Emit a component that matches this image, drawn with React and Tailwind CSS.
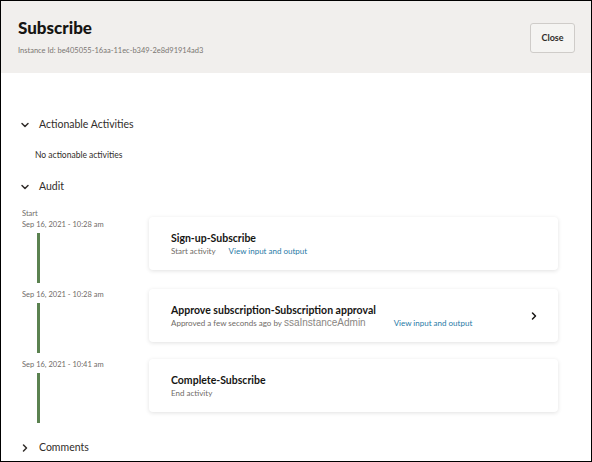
import { ChevronDown, ChevronRight } from 'lucide-react';

const rows = [
  {
    start: true,
    date: 'Sep 16, 2021 - 10:28 am',
    title: 'Sign-up-Subscribe',
    sub: 'Start activity',
    link: true,
  },
  {
    date: 'Sep 16, 2021 - 10:28 am',
    title: 'Approve subscription-Subscription approval',
    sub: 'Approved a few seconds ago by',
    user: 'ssaInstanceAdmin',
    link: true,
    chevron: true,
  },
  {
    date: 'Sep 16, 2021 - 10:41 am',
    title: 'Complete-Subscribe',
    sub: 'End activity',
  },
];

const SectionHeader = ({ label, open = true }) => (
  <div className="flex items-center h-[20px] text-[#312d2a]">
    <div className="w-[20px] flex items-center">
      {open ? (
        <ChevronDown size={12} strokeWidth={3} />
      ) : (
        <ChevronRight size={12} strokeWidth={3} />
      )}
    </div>
    <span className="text-[10.5px]">{label}</span>
  </div>
);

const App = () => {
  return (
    <div className="w-[592px] h-[462px] border border-black overflow-hidden bg-white font-['Lato',sans-serif] text-[#312d2a]">
      {/* Header */}
      <div className="h-[72px] bg-[#f1efed] flex justify-between items-start pl-[17px] pr-[16px]">
        <div className="pt-[16px]">
          <h1 className="text-[17px] leading-[22px] font-black text-[#161513]">Subscribe</h1>
          <p className="text-[7.5px] text-[#7a7672] mt-[6px]">
            Instance Id: be405055-16aa-11ec-b349-2e8d91914ad3
          </p>
        </div>
        <button className="mt-[22px] w-[45px] h-[30px] border border-[#cfccc9] rounded-[3px] bg-[#f5f4f2] text-[9px] font-bold text-[#312d2a]">
          Close
        </button>
      </div>

      {/* Body */}
      <div className="pl-[18px] pt-[42px]">
        <SectionHeader label="Actionable Activities" />
        <p className="pl-[16px] mt-[14px] text-[8.5px] leading-[12px] text-[#312d2a]">
          No actionable activities
        </p>
        <div className="mt-[16px]">
          <SectionHeader label="Audit" />
        </div>

        <div className="mt-[11px] flex flex-col gap-[6px]">
          {rows.map((row, i) => (
            <div key={i} className="flex items-start">
              <div className="w-[130px] shrink-0 pl-[3px] text-[7.5px] leading-[11px] text-[#6f6b67]">
                {row.start && <div>Start</div>}
                <div>{row.date}</div>
                <div className="ml-[15px] mt-[3px] w-[3px] h-[50px] bg-[#5b8250]"></div>
              </div>
              <div
                className={`flex-1 mr-[33px] h-[53px] rounded-[4px] bg-white shadow-[0_1px_4px_rgba(0,0,0,0.12)] flex items-center pl-[22px] pr-[18px] ${
                  row.start ? 'mt-[9px]' : ''
                }`}
              >
                <div className="flex-1">
                  <div className="text-[10.5px] leading-[14px] font-bold text-[#161513]">
                    {row.title}
                  </div>
                  <div className="flex items-center text-[8px] leading-[12px] text-[#6f6b67]">
                    <span>{row.sub}</span>
                    {row.user && (
                      <span className="ml-[2px] font-['Liberation_Sans',sans-serif] text-[10px] text-[#8a8682]">
                        {row.user}
                      </span>
                    )}
                    {row.link && (
                      <span className={`text-[#1f7aa6] ${row.user ? 'ml-[28px]' : 'ml-[13px]'}`}>
                        View input and output
                      </span>
                    )}
                  </div>
                </div>
                {row.chevron && <ChevronRight size={12} strokeWidth={3} className="text-[#161513]" />}
              </div>
            </div>
          ))}
        </div>

        <div className="mt-[15px]">
          <SectionHeader label="Comments" open={false} />
        </div>
      </div>
    </div>
  );
};

export default App;
